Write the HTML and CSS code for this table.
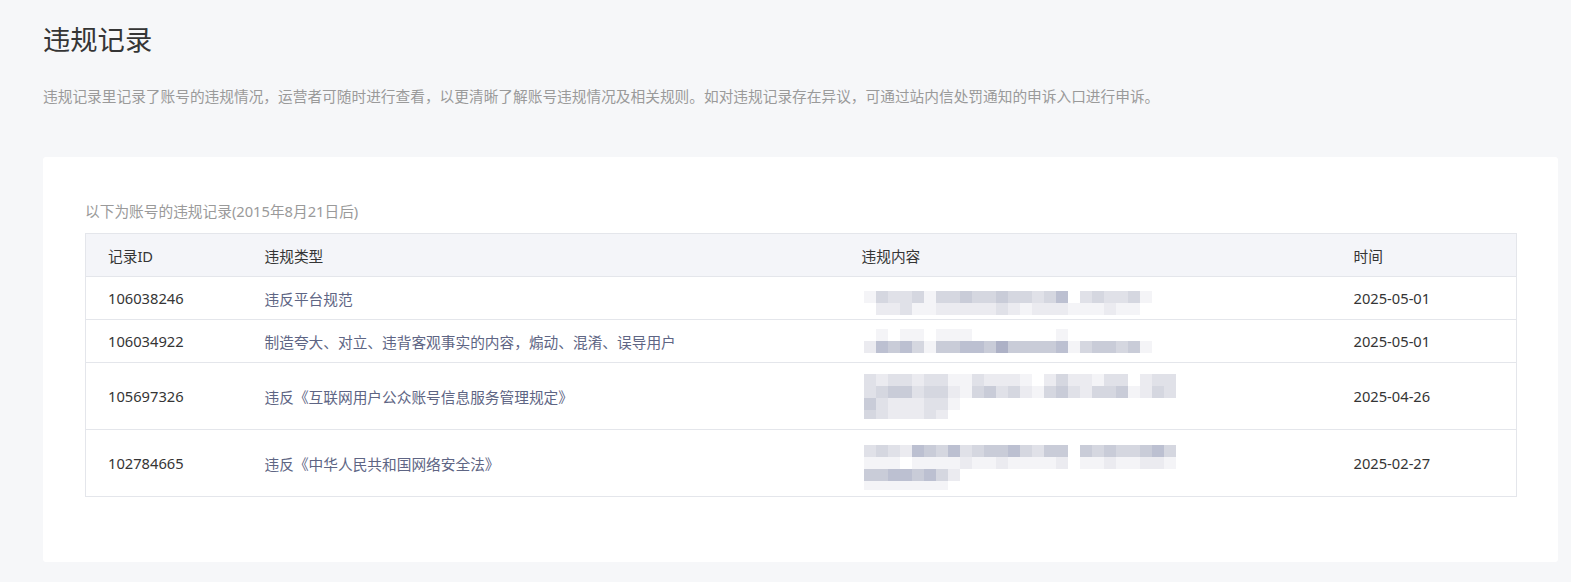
FILE: index.html
```html
<!DOCTYPE html>
<html lang="zh-CN">
<head>
<meta charset="utf-8">
<title>违规记录</title>
<link rel="stylesheet" href="styles.css">
</head>
<body>
<div class="page">
  <h1 class="title">违规记录</h1>
  <p class="desc">违规记录里记录了账号的违规情况，运营者可随时进行查看，以更清晰了解账号违规情况及相关规则。如对违规记录存在异议，可通过站内信处罚通知的申诉入口进行申诉。</p>
  <section class="card">
    <p class="sub">以下为账号的违规记录(2015年8月21日后)</p>
    <table class="tbl">
      <colgroup>
        <col class="c-id"><col class="c-type"><col class="c-content"><col class="c-time">
      </colgroup>
      <thead>
        <tr><th>记录ID</th><th>违规类型</th><th>违规内容</th><th>时间</th></tr>
      </thead>
      <tbody>
        <tr>
          <td class="id">106038246</td>
          <td class="type">违反平台规范</td>
          <td><div class="mosaic down" data-lines="1433414454454434603433410|0223112222232122211121100"></div></td>
          <td class="time">2025-05-01</td>
        </tr>
        <tr>
          <td class="id">106034922</td>
          <td class="type">制造夸大、对立、违背客观事实的内容，煽动、混淆、误导用户</td>
          <td><div class="mosaic" data-lines="010110111000000010000000|265641556657555561455451"></div></td>
          <td class="time">2025-05-01</td>
        </tr>
        <tr class="tall">
          <td class="id">105697326</td>
          <td class="type">违反《互联网用户公众账号信息服务管理规定》</td>
          <td><div class="mosaic" data-lines="32332331132221024221330233|34553442145342145324451243|53222331|s43222320"></div></td>
          <td class="time">2025-04-26</td>
        </tr>
        <tr class="tall">
          <td class="id">102784665</td>
          <td class="type">违反《中华人民共和国网络安全法》</td>
          <td><div class="mosaic down2" data-lines="34326546345564355054544564|11101111211211112011211221|55665642|s11111110"></div></td>
          <td class="time">2025-02-27</td>
        </tr>
      </tbody>
    </table>
  </section>
</div>
<script src="app.js"></script>
</body>
</html>
```

FILE: styles.css
```css
* { box-sizing: border-box; }
html, body { margin: 0; padding: 0; }
body {
  background: #f6f7f9;
  font-family: "Noto Sans", "Noto Sans CJK SC", sans-serif;
  color: #353535;
}
.page {
  padding: 20px 13px 22px 43px;
}
.title {
  margin: 0;
  font-size: 27.3px;
  line-height: 40px;
  font-weight: 400;
  color: #353535;
}
.desc {
  margin: 26px 0 0;
  font-size: 14.7px;
  line-height: 20px;
  color: #9a9a9a;
}
.card {
  margin-top: 51px;
  background: #fff;
  border-radius: 3px;
  padding: 44px 41px 65px 42px;
}
.sub {
  margin: 0 0 12px;
  font-size: 14.7px;
  line-height: 20px;
  color: #9a9a9a;
}
.tbl {
  width: 100%;
  border-collapse: collapse;
  table-layout: fixed;
  border: 1px solid #e4e6eb;
  font-size: 14.7px;
}
.c-id { width: 157px; }
.c-type { width: 597px; }
.c-content { width: 492px; }
.c-time { width: auto; }
.tbl th, .tbl td {
  text-align: left;
  padding: 0 0 0 22px;
  height: 43px;
  border-bottom: 1px solid #e4e6eb;
  font-weight: 400;
  white-space: nowrap;
  vertical-align: middle;
}
.tbl thead th {
  background: #f4f5f9;
  color: #353535;
}
.tbl tr.tall td { height: 67px; }
.tbl td.id, .tbl td.time { color: #353535; }
.tbl td.type { color: #5e6584; }
.mosaic {
  display: flex;
  flex-direction: column;
  margin-left: 2px;
}
.mosaic.down { margin-top: 9px; }
.mosaic.down2 { margin-top: 8px; }
.mline { display: flex; height: 12px; }
.mline.short { height: 9px; }
.px { width: 12px; height: 100%; flex: none; }
.p0 { background: transparent; }
.p1 { background: #f4f4f7; }
.p2 { background: #ebebf0; }
.p3 { background: #e0e1e8; }
.p4 { background: #d5d7e0; }
.p5 { background: #c9ccd8; }
.p6 { background: #bcc0d1; }
.p7 { background: #adb1c6; }
```

FILE: app.js
```js
document.querySelectorAll('.mosaic').forEach(function (m) {
  m.getAttribute('data-lines').split('|').forEach(function (line) {
    var row = document.createElement('div');
    row.className = 'mline';
    if (line.charAt(0) === 's') { row.className += ' short'; line = line.slice(1); }
    line.split('').forEach(function (c) {
      var s = document.createElement('span');
      s.className = 'px p' + c;
      row.appendChild(s);
    });
    m.appendChild(row);
  });
});
```
